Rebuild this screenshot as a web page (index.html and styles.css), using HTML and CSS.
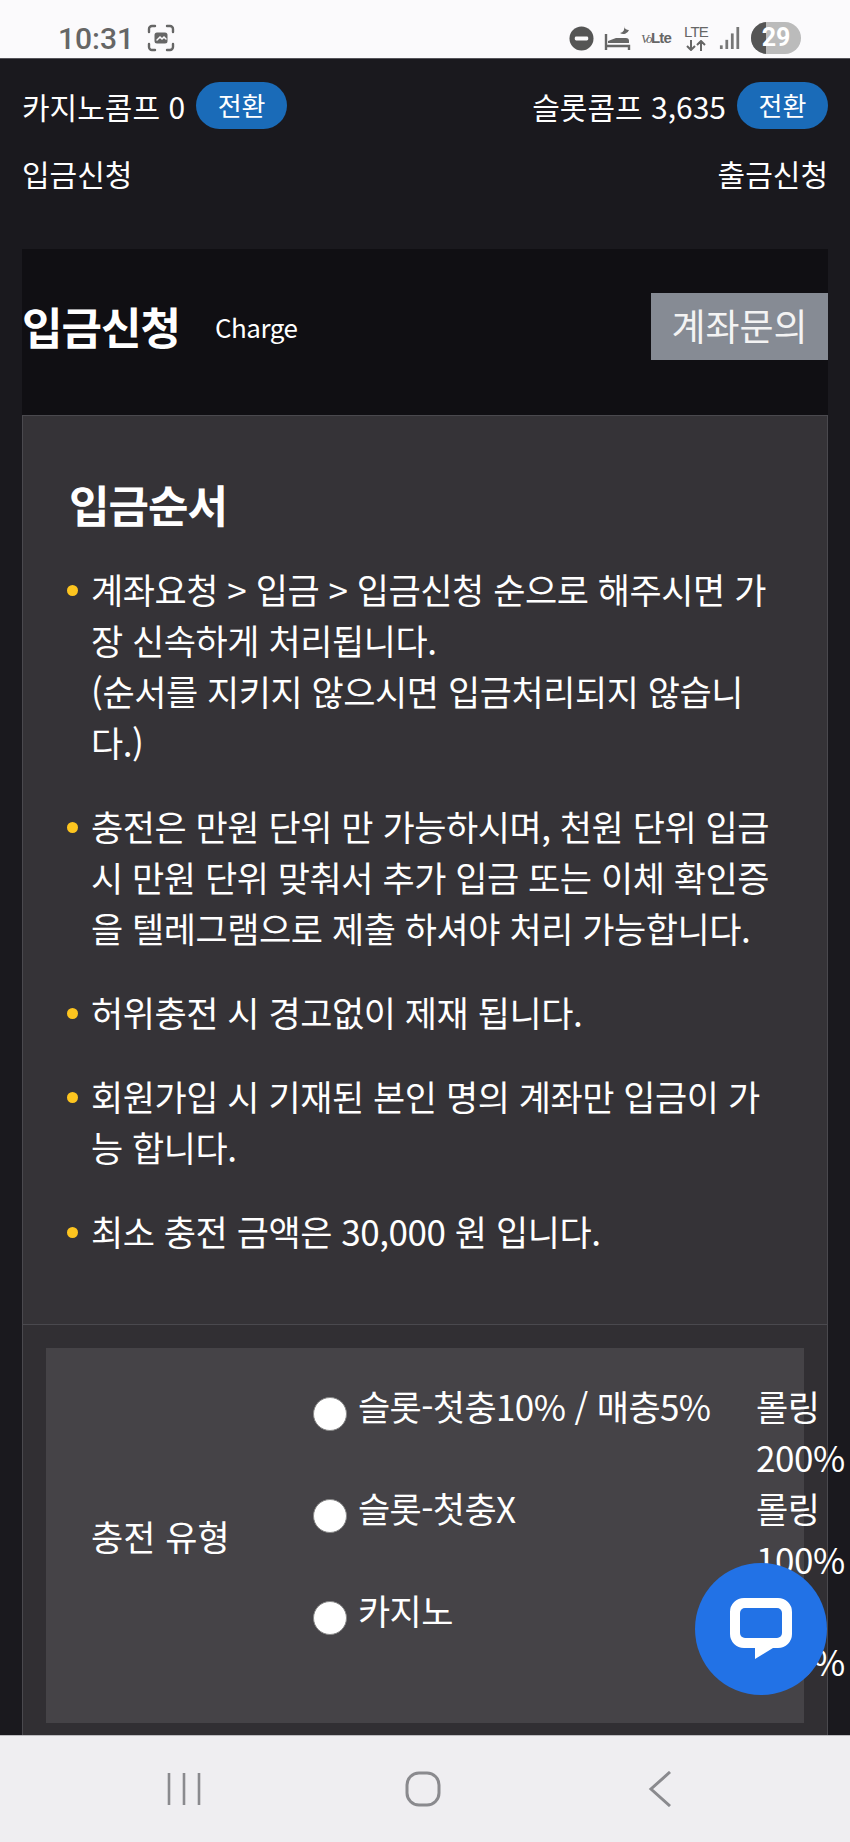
FILE: index.html
```html
<!DOCTYPE html>
<html lang="ko">
<head>
    <meta charset="UTF-8">
    <title>입금신청</title>
    <link rel="stylesheet" href="styles.css">
</head>
<body>

<div class="screen">
    <!-- Status bar -->
    <div class="status">
        <div class="status-left">
            <span class="clock">10:31</span>
            <svg class="shot-icon" width="28" height="28" viewBox="0 0 28 28" fill="none" stroke="#666" stroke-width="2.4" stroke-linecap="round">
                <path d="M2 8V5a3 3 0 0 1 3-3h3M20 2h3a3 3 0 0 1 3 3v3M26 20v3a3 3 0 0 1-3 3h-3M8 26H5a3 3 0 0 1-3-3v-3"/>
                <rect x="7.500" y="8.500" width="13" height="11" rx="2.500" fill="#666" stroke="none"/>
                <path d="M10 16l3-3 2 2 2-2 2 2" stroke="#fbfafc" stroke-width="1.500"/>
            </svg>
        </div>
        <div class="status-right">
            <svg width="25" height="25" viewBox="0 0 26 26"><circle cx="13" cy="13" r="12.500" fill="#555"/><rect x="6" y="11" width="14" height="4" rx="1.500" fill="#fbfafc"/></svg>
            <svg width="27" height="24" viewBox="0 0 27 24" fill="none" stroke="#666" stroke-width="2.400">
                <path d="M2 8v16M2 20h23v4"/>
                <path d="M4 15l8-3h10a3 3 0 0 1 3 3v2H4z" fill="#666" stroke="none"/>
                <path d="M20 0a5 5 0 0 1-4 7 6 6 0 0 0 9-3 5 5 0 0 1-5-4z" fill="#666" stroke="none"/>
            </svg>
            <span class="volte"><i>Vo</i>Lte</span>
            <div class="lte">
                <span class="lte-text">LTE</span>
                <svg width="20" height="11" viewBox="0 0 20 11" fill="none" stroke="#666" stroke-width="2"><path d="M5 0v9M1 6l4 4 4-4M15 11V2M11 5l4-4 4 4"/></svg>
            </div>
            <svg width="22" height="22" viewBox="0 0 22 24" fill="#777"><rect x="0" y="20" width="3" height="4"/><rect x="6" y="14" width="3" height="10"/><rect x="12" y="7" width="3" height="17"/><rect x="18" y="0" width="3" height="24"/></svg>
            <div class="battery"><span class="battery-fill"></span><span class="battery-num">29</span></div>
        </div>
    </div>

    <div class="page">
        <!-- Comp row -->
        <div class="comp-row">
            <div class="comp">카지노콤프 0 <a class="pill">전환</a></div>
            <div class="comp">슬롯콤프 3,635 <a class="pill">전환</a></div>
        </div>
        <div class="link-row">
            <a>입금신청</a>
            <a>출금신청</a>
        </div>

        <!-- Title -->
        <div class="head">
            <h1>입금신청</h1>
            <span class="sub">Charge</span>
            <a class="account-btn">계좌문의</a>
        </div>

        <!-- Notice -->
        <div class="notice">
            <h2>입금순서</h2>
            <ul>
                <li>계좌요청 &gt; 입금 &gt; 입금신청 순으로 해주시면 가장 신속하게 처리됩니다.<br>(순서를 지키지 않으시면 입금처리되지 않습니다.)</li>
                <li>충전은 만원 단위 만 가능하시며, 천원 단위 입금 시 만원 단위 맞춰서 추가 입금 또는 이체 확인증을 텔레그램으로 제출 하셔야 처리 가능합니다.</li>
                <li>허위충전 시 경고없이 제재 됩니다.</li>
                <li>회원가입 시 기재된 본인 명의 계좌만 입금이 가능 합니다.</li>
                <li>최소 충전 금액은 30,000 원 입니다.</li>
            </ul>
        </div>

        <!-- Form -->
        <div class="form-panel">
            <div class="form-box">
                <div class="type-label">충전 유형</div>
                <div class="type-list">
                    <div class="type-row">
                        <span class="radio"></span>
                        <span class="type-name">슬롯-첫충10% / 매충5%</span>
                        <span class="type-roll">롤링 200%</span>
                    </div>
                    <div class="type-row">
                        <span class="radio"></span>
                        <span class="type-name">슬롯-첫충X</span>
                        <span class="type-roll">롤링 100%</span>
                    </div>
                    <div class="type-row">
                        <span class="radio"></span>
                        <span class="type-name">카지노</span>
                        <span class="type-roll">롤링 100%</span>
                    </div>
                </div>
            </div>
        </div>

        <!-- Chat button -->
        <div class="chat">
            <svg width="64" height="62" viewBox="0 0 64 62">
                <path d="M15 0h34a14 14 0 0 1 14 14v22a14 14 0 0 1-14 14h-5L26 61V50H15A14 14 0 0 1 1 36V14A14 14 0 0 1 15 0z" fill="#fff"/>
                <rect x="11" y="10" width="42" height="30" rx="5" fill="#2272e6"/>
            </svg>
        </div>
    </div>

    <!-- Navigation bar -->
    <div class="nav">
        <svg width="34" height="34" viewBox="0 0 34 34" stroke="#8a8a8e" stroke-width="2.600"><path d="M2 1v32M17 1v32M32 1v32"/></svg>
        <svg width="36" height="36" viewBox="0 0 36 36" fill="none" stroke="#8a8a8e" stroke-width="3"><rect x="2" y="2" width="32" height="32" rx="12"/></svg>
        <svg width="24" height="36" viewBox="0 0 24 36" fill="none" stroke="#8a8a8e" stroke-width="3"><path d="M22 1L3 18l19 17"/></svg>
    </div>
</div>

</body>
</html>
```
FILE: styles.css
```css
/* Global */
* {
    box-sizing: border-box;
}

body {
    margin: 0;
    padding: 0;
    font-family: 'Noto Sans CJK KR', 'Noto Sans', sans-serif;
    color: #fff;
    background-color: #1a191e;
}

.screen {
    width: 850px;
    height: 1842px;
    display: flex;
    flex-direction: column;
    overflow: hidden;
}

/* Status bar */
.status {
    height: 59px;
    flex: none;
    background-color: #fbfafc;
    border-bottom: 1px solid #55545a;
    display: flex;
    justify-content: space-between;
    align-items: center;
    padding: 18px 49px 0 58px;
    color: #666;
}

.status-left {
    display: flex;
    align-items: center;
    gap: 13px;
}

.clock {
    font-family: Roboto, sans-serif;
    font-size: 30px;
    font-weight: 500;
}

.status-right {
    display: flex;
    align-items: center;
    gap: 10px;
}

.volte {
    font-family: 'Liberation Sans', sans-serif;
    font-size: 15px;
    font-weight: 700;
    width: 32px;
    white-space: nowrap;
    letter-spacing: -0.8px;
}

.volte i {
    font-family: 'Liberation Serif', serif;
    font-weight: 400;
    font-size: 13px;
    letter-spacing: -1.5px;
}

.lte {
    width: 26px;
    display: flex;
    flex-direction: column;
    align-items: center;
    gap: 2px;
}

.lte-text {
    font-family: 'Liberation Sans', sans-serif;
    font-size: 15px;
    line-height: 13px;
    letter-spacing: -0.8px;
}

.battery {
    position: relative;
    width: 50px;
    height: 32px;
    border-radius: 16px;
    background-color: #bbb;
    overflow: hidden;
    text-align: center;
}

.battery-fill {
    position: absolute;
    left: 0;
    top: 0;
    bottom: 0;
    width: 15px;
    background-color: #555;
}

.battery-num {
    position: relative;
    font-family: Roboto, sans-serif;
    font-weight: 700;
    font-size: 25px;
    line-height: 32px;
    color: #fff;
}

/* Content */
.page {
    position: relative;
    flex: 1;
    min-height: 0;
    overflow: hidden;
    padding: 23px 22px 0;
    font-size: 35px;
}

.comp-row,
.link-row {
    display: flex;
    justify-content: space-between;
    align-items: center;
}

.comp-row {
    height: 47px;
}

.comp {
    display: flex;
    align-items: center;
    gap: 11px;
    font-size: 30px;
}

.pill {
    width: 91px;
    height: 47px;
    border-radius: 24px;
    background-color: #1a6bb8;
    font-size: 26px;
    line-height: 45px;
    text-align: center;
}

.link-row {
    height: 44px;
    margin-top: 22px;
    font-size: 30px;
}

/* Title */
.head {
    margin-top: 54px;
    height: 166px;
    background-color: #100f13;
    display: flex;
    align-items: center;
    padding-bottom: 12px;
}

h1 {
    margin: 0 35px 0 0;
    font-size: 44px;
    font-weight: 700;
    letter-spacing: -1px;
}

.sub {
    font-size: 26px;
    letter-spacing: -0.5px;
}

.account-btn {
    margin-left: auto;
    width: 177px;
    height: 67px;
    background-color: #868b94;
    font-size: 37px;
    line-height: 65px;
    text-align: center;
    color: #f3f3f3;
}

/* Notice */
.notice {
    height: 910px;
    background-color: #353337;
    border: 1px solid #4a494e;
    padding: 60px 46px 0;
}

h2 {
    margin: 0 0 31px;
    font-size: 44px;
    font-weight: 700;
    line-height: 56px;
    letter-spacing: -1px;
}

.notice ul {
    margin: 0;
    padding: 0;
    list-style: none;
}

.notice li {
    position: relative;
    padding-left: 22px;
    margin-bottom: 33px;
    line-height: 51px;
    letter-spacing: -0.45px;
    word-break: break-all;
}

.notice li::before {
    content: "";
    position: absolute;
    left: -2px;
    top: 22px;
    width: 11px;
    height: 11px;
    border-radius: 50%;
    background-color: #fdc51f;
}

/* Form */
.form-panel {
    height: 410px;
    background-color: #312f33;
    border-left: 1px solid #4a494e;
    border-right: 1px solid #4a494e;
    padding: 23px 23px 0;
}

.form-box {
    height: 375px;
    background-color: #454347;
    display: flex;
    align-items: center;
}

.type-label {
    width: 266px;
    padding-left: 45px;
    flex: none;
}

.type-list {
    display: flex;
    flex-direction: column;
    margin-top: -6px;
}

.type-row {
    height: 102px;
    display: flex;
    align-items: flex-start;
}

.radio {
    width: 34px;
    height: 34px;
    margin: 17px 11px 0 1px;
    flex: none;
    border-radius: 50%;
    background-color: #fff;
    border: 1px solid #888;
}

.type-name {
    width: 398px;
    flex: none;
    line-height: 51px;
    letter-spacing: -0.6px;
}

.type-roll {
    width: 70px;
    flex: none;
    line-height: 51px;
    letter-spacing: -0.4px;
    word-break: keep-all;
}

/* Chat button */
.chat {
    position: absolute;
    left: 695px;
    top: 1504px;
    width: 132px;
    height: 132px;
    border-radius: 50%;
    background-color: #2272e6;
    display: flex;
    align-items: center;
    justify-content: center;
}

/* Navigation bar */
.nav {
    height: 107px;
    flex: none;
    background-color: #efeef1;
    border-top: 1px solid #bdbcc0;
    display: flex;
    align-items: center;
}

.nav svg:nth-child(1) {
    margin-left: 167px;
}

.nav svg:nth-child(2) {
    margin-left: 204px;
}

.nav svg:nth-child(3) {
    margin-left: 207px;
}
```
